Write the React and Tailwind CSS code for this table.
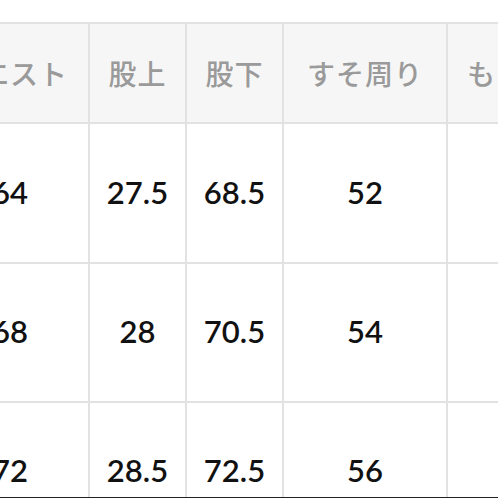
import React from 'react';

const HEAD = ['ウエスト', '股上', '股下', 'すそ周り', 'もも周り'];
const ROWS = [
  ['64', '27.5', '68.5', '52', ''],
  ['68', '28', '70.5', '54', ''],
  ['72', '28.5', '72.5', '56', ''],
];

const cell = 'flex items-center justify-center border-r-2 border-b-2 border-[#e2e2e2]';

export default function App() {
  return (
    <div className="w-[498px] h-[498px] bg-white overflow-hidden flex flex-col">
      <div className="flex-1 overflow-hidden pt-[22px]">
        <div className="ml-[-68px] w-[680px] grid grid-cols-[158px_97px_97px_164px_156px] border-t-2 border-[#e2e2e2]">
          {HEAD.map((h) => (
            <div
              key={h}
              className={`${cell} h-[100px] bg-[#f6f6f6] text-[#9a9a9a] text-[28px] font-medium tracking-[1px] font-['Noto_Sans_CJK_JP',sans-serif]`}
            >
              {h}
            </div>
          ))}
          {ROWS.map((r, i) =>
            r.map((v, j) => (
              <div
                key={i + '-' + j}
                className={`${cell} ${i === 0 ? 'h-[140px]' : 'h-[139px]'} text-[#111] text-[31px] font-semibold font-['Lato',sans-serif] pb-[2px]`}
              >
                {v}
              </div>
            ))
          )}
        </div>
      </div>
      <div className="h-px bg-[#222]" />
    </div>
  );
}
